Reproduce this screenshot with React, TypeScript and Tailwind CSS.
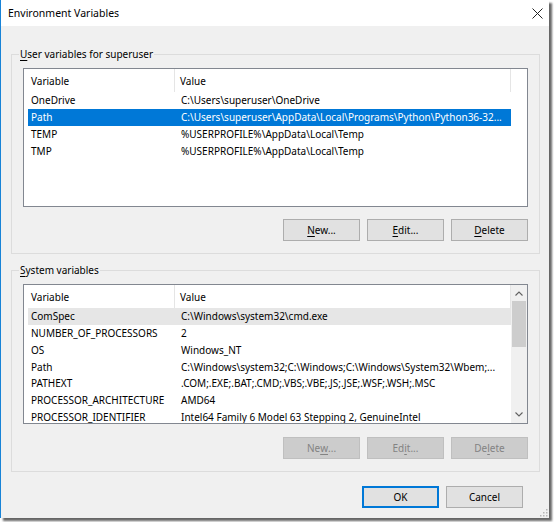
import React from 'react';

type Row = { name: string; value: string; state?: 'active' | 'inactive' };

const userVars: Row[] = [
    { name: 'OneDrive', value: 'C:\\Users\\superuser\\OneDrive' },
    { name: 'Path', value: 'C:\\Users\\superuser\\AppData\\Local\\Programs\\Python\\Python36-32...', state: 'active' },
    { name: 'TEMP', value: '%USERPROFILE%\\AppData\\Local\\Temp' },
    { name: 'TMP', value: '%USERPROFILE%\\AppData\\Local\\Temp' },
];

const systemVars: Row[] = [
    { name: 'ComSpec', value: 'C:\\Windows\\system32\\cmd.exe', state: 'inactive' },
    { name: 'NUMBER_OF_PROCESSORS', value: '2' },
    { name: 'OS', value: 'Windows_NT' },
    { name: 'Path', value: 'C:\\Windows\\system32;C:\\Windows;C:\\Windows\\System32\\Wbem;...' },
    { name: 'PATHEXT', value: '.COM;.EXE;.BAT;.CMD;.VBS;.VBE;.JS;.JSE;.WSF;.WSH;.MSC' },
    { name: 'PROCESSOR_ARCHITECTURE', value: 'AMD64' },
    { name: 'PROCESSOR_IDENTIFIER', value: 'Intel64 Family 6 Model 63 Stepping 2, GenuineIntel' },
];

const Chevron = ({ down }: { down?: boolean }) => (
    <svg width="8" height="5" viewBox="0 0 8 5" className={down ? 'rotate-180' : ''}>
        <path d="M0.5 4.5 L4 1 L7.5 4.5" fill="none" stroke="#606060" strokeWidth="1.1" />
    </svg>
);

const VarList = ({ rows, scroll, height }: { rows: Row[]; scroll?: boolean; height: string }) => (
    <div className={`flex border border-[#828790] bg-white overflow-hidden ${height}`}>
        <div className="flex flex-col w-[487px] shrink-0 pl-[4px]">
            <div className="flex h-[23px] shrink-0">
                <div className="w-[147px] flex items-center pl-[3px] border-r border-[#e5e5e5]">Variable</div>
                <div className="w-[336px] flex items-center pl-[5px] border-r border-[#e5e5e5]">Value</div>
            </div>
            {rows.map((r) => (
                <div
                    key={r.name}
                    className={`flex h-[16.75px] shrink-0 items-center whitespace-nowrap ${
                        r.state === 'active' ? 'bg-[#0078d7] text-white' : r.state === 'inactive' ? 'bg-[#e6e6e6]' : ''
                    }`}
                >
                    <div className="w-[147px] pl-[3px] overflow-hidden">{r.name}</div>
                    <div className="w-[336px] pl-[6px] overflow-hidden">{r.value}</div>
                </div>
            ))}
        </div>
        {scroll && (
            <div className="w-[16px] shrink-0 bg-[#f0f0f0] flex flex-col">
                <div className="h-[16px] flex items-center justify-center">
                    <Chevron />
                </div>
                <div className="h-[46px] mx-[1px] bg-[#cdcdcd]" />
                <div className="flex-1" />
                <div className="h-[18px] flex items-center justify-center">
                    <Chevron down />
                </div>
            </div>
        )}
    </div>
);

const Btn = ({ children, disabled, primary }: { children: React.ReactNode; disabled?: boolean; primary?: boolean }) => (
    <button
        className={`w-[77px] h-[22px] flex items-center justify-center ${
            disabled
                ? 'bg-[#cccccc] border border-[#bfbfbf] text-[#838383]'
                : primary
                ? 'bg-[#e1e1e1] border-2 border-[#0078d7] text-black'
                : 'bg-[#e1e1e1] border border-[#adadad] text-black'
        }`}
    >
        {children}
    </button>
);

const U = ({ children }: { children: React.ReactNode }) => <span className="underline underline-offset-[2px]">{children}</span>;

export default function App() {
    return (
        <div className="w-[554px] h-[522px] bg-white font-['Noto_Sans','Liberation_Sans',sans-serif] text-[10px] text-black leading-[16px]">
            <div className="relative w-[549px] h-[518px] bg-[#f0f0f0] border-l border-[#1883d7] shadow-[3px_3px_2px_rgba(0,0,0,0.6)] flex flex-col">
                {/* title bar */}
                <div className="h-[26px] shrink-0 bg-white flex items-center pl-[7px]">
                    <span className="text-[10.5px]">Environment Variables</span>
                    <svg width="11" height="11" viewBox="0 0 11 11" className="ml-auto mr-[6px]">
                        <path d="M0.5 0.5 L10.5 10.5 M10.5 0.5 L0.5 10.5" stroke="#222" strokeWidth="1" />
                    </svg>
                </div>

                <fieldset className="ml-[10px] w-[529px] mt-[20px] border border-[#dcdcdc]">
                    <legend className="ml-[7px] px-[1px]">
                        <U>U</U>ser variables for superuser
                    </legend>
                    <div className="px-[11px] pt-[6px] pb-[12px]">
                        <VarList rows={userVars} height="h-[139px]" />
                        <div className="flex justify-end gap-[7px] mt-[12px]">
                            <Btn>
                                <U>N</U>ew...
                            </Btn>
                            <Btn>
                                <U>E</U>dit...
                            </Btn>
                            <Btn>
                                <U>D</U>elete
                            </Btn>
                        </div>
                    </div>
                </fieldset>

                <fieldset className="ml-[10px] w-[529px] mt-[8px] border border-[#dcdcdc]">
                    <legend className="ml-[7px] px-[1px]">
                        <U>S</U>ystem variables
                    </legend>
                    <div className="px-[11px] pt-[6px] pb-[12px]">
                        <VarList rows={systemVars} scroll height="h-[140px]" />
                        <div className="flex justify-end gap-[7px] mt-[13px]">
                            <Btn disabled>
                                Ne<U>w</U>...
                            </Btn>
                            <Btn disabled>
                                Ed<U>i</U>t...
                            </Btn>
                            <Btn disabled>
                                De<U>l</U>ete
                            </Btn>
                        </div>
                    </div>
                </fieldset>

                <div className="flex justify-end gap-[7px] mt-[14px] pr-[26px]">
                    <Btn primary>OK</Btn>
                    <Btn>Cancel</Btn>
                </div>

                {/* size grip */}
                <svg width="9" height="9" viewBox="0 0 9 9" className="absolute right-[1px] bottom-[1px]">
                    <rect x="7" y="1" width="1.5" height="1.5" fill="#b5b5b5" />
                    <rect x="4" y="4" width="1.5" height="1.5" fill="#b5b5b5" />
                    <rect x="7" y="4" width="1.5" height="1.5" fill="#b5b5b5" />
                    <rect x="1" y="7" width="1.5" height="1.5" fill="#b5b5b5" />
                    <rect x="4" y="7" width="1.5" height="1.5" fill="#b5b5b5" />
                    <rect x="7" y="7" width="1.5" height="1.5" fill="#b5b5b5" />
                </svg>
            </div>
        </div>
    );
}
